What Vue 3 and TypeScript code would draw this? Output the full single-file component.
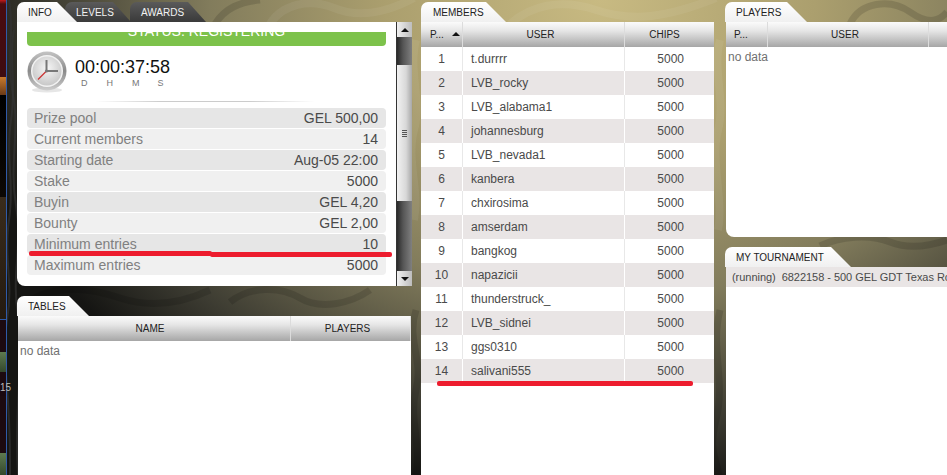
<script setup lang="ts">
interface Member { pos: number; user: string; chips: number }
const users = ['t.durrrr','LVB_rocky','LVB_alabama1','johannesburg','LVB_nevada1','kanbera','chxirosima','amserdam','bangkog','napazicii','thunderstruck_','LVB_sidnei','ggs0310','salivani555']
const members: Member[] = users.map((user, i) => ({ pos: i + 1, user, chips: 5000 }))
const info: [string, string][] = [
  ['Prize pool','GEL 500,00'],['Current members','14'],['Starting date','Aug-05 22:00'],['Stake','5000'],
  ['Buyin','GEL 4,20'],['Bounty','GEL 2,00'],['Minimum entries','10'],['Maximum entries','5000'],
]
</script>

<template>
  <div class="page">
    <div class="bg">
      <svg class="swirls" width="947" height="475" viewBox="0 0 947 475" fill="none">
        <g stroke="#000" stroke-opacity=".13" stroke-width="7">
          <path d="M30 300c30-16 60-12 90-2s60 6 90-8"/>
          <path d="M230 302c20-16 50-16 70-4s50 6 70-8"/>
          <path d="M416 310c-10 30 8 50 0 80s8 60-2 95"/>
          <path d="M720 310c-10 40 6 70-4 110s6 40 2 65"/>
          <path d="M820 246c20-10 50-12 70-4s40 4 57-2"/>
          <path d="M850 24c10-22 40-26 60-12s30 8 37 0"/>
          <path d="M215 24c10-16 25-22 45-24"/>
        </g>
        <g stroke="#fff" stroke-opacity=".06" stroke-width="8">
          <path d="M270 24c12-20 40-26 64-16s50 6 80-10"/>
          <path d="M510 24c20-18 50-26 86-14s70 8 120-12"/>
          <path d="M416 40c-8 30 6 60-2 90s6 60 0 90"/>
          <path d="M720 40c-8 30 6 60-2 90s6 70 0 100"/>
        </g>
        <g stroke="#333" stroke-opacity=".7" stroke-width="2">
          <path d="M9 0c6 30-3 60 4 95s-4 70 3 110s-5 70 2 110s-4 80 0 160"/>
          <path d="M14 30c-6 30 3 50-3 90s4 60-2 100s5 60-2 100s4 60 3 155"/>
        </g>
      </svg>
    </div>
    <div class="strip">
      <div class="s-red"></div>
      <div class="s-orange"></div>
      <div class="s-black"></div>
      <div class="s-brown"></div>
      <div class="s-maroon"></div>
      <div class="s-green"></div>
      <div class="s-gap"></div>
      <div class="s-num">15</div>
      <div class="s-maroon2"></div>
      <div class="s-green s-green2"></div>
    </div>

    <div class="col col-left">
      <section class="info-panel">
        <div class="tabs">
          <div class="tab active tab-info">INFO</div>
          <div class="tab dark tab-levels">LEVELS</div>
          <div class="tab dark tab-awards">AWARDS</div>
        </div>
        <div class="info-body">
          <div class="info-scroll">
            <div class="status"><span>STATUS: REGISTERING</span></div>
            <div class="timer">
              <svg width="40" height="42" viewBox="0 0 40 42">
                <defs>
                  <linearGradient id="rim" x1="0" y1="0" x2="0" y2="1">
                    <stop offset="0" stop-color="#c4c4c4"/><stop offset=".5" stop-color="#8a8a8a"/><stop offset="1" stop-color="#cfcfcf"/>
                  </linearGradient>
                  <radialGradient id="face" cx=".5" cy=".4" r=".65">
                    <stop offset="0" stop-color="#f6f6f6"/><stop offset="1" stop-color="#c4c4c4"/>
                  </radialGradient>
                </defs>
                <ellipse cx="20" cy="39" rx="15" ry="2.5" fill="#e6e6e6"/>
                <circle cx="20" cy="20" r="19.5" fill="url(#rim)"/>
                <circle cx="20" cy="20" r="16" fill="#f2f2f2"/>
                <circle cx="20" cy="20" r="14.5" fill="url(#face)"/>
                <path d="M19.5 20V9" stroke="#777" stroke-width="2"/>
                <path d="M19.5 20H31" stroke="#777" stroke-width="2"/>
                <path d="M19.5 20L11 28.5" stroke="#c33" stroke-width="1.2"/>
                <circle cx="19.5" cy="20" r="1.6" fill="#777"/>
              </svg>
              <div class="count">
                <div class="digits">00:00:37:58</div>
                <div class="units"><span>D</span><span>H</span><span>M</span><span>S</span></div>
              </div>
            </div>
            <div class="sep"></div>
            <div class="rows">
              <div v-for="(r, i) in info" :key="r[0]" class="irow" :class="{ odd: i % 2 === 0 }">
                <span class="ilabel">{{ r[0] }}</span><span class="ival">{{ r[1] }}</span>
              </div>
            </div>
            <i class="mark mark-a"></i><i class="mark mark-b"></i>
          </div>
          <div class="scrollbar">
            <div class="sb-btn"><b class="up"></b></div>
            <div class="sb-track sb-t1"></div>
            <div class="sb-thumb"><span></span><span></span><span></span><span></span></div>
            <div class="sb-track sb-t2"></div>
            <div class="sb-btn"><b class="down"></b></div>
          </div>
        </div>
      </section>

      <section class="tables-panel">
        <div class="tabs"><div class="tab active tab-tables">TABLES</div></div>
        <div class="card">
          <div class="thead">
            <div class="th name-col">NAME</div>
            <div class="th players-col">PLAYERS</div>
          </div>
          <div class="nodata">no data</div>
        </div>
      </section>
    </div>

    <div class="col col-mid">
      <div class="tabs"><div class="tab active tab-members">MEMBERS</div></div>
      <div class="card">
        <div class="thead">
          <div class="th c-pos pos-head">P...<b class="up sort"></b></div>
          <div class="th c-user">USER</div>
          <div class="th c-chips">CHIPS</div>
        </div>
        <div v-for="m in members" :key="m.pos" class="mrow" :class="{ alt: m.pos % 2 === 0 }">
          <div class="c-pos cell-pos">{{ m.pos }}</div>
          <div class="c-user cell-user">{{ m.user }}</div>
          <div class="c-chips cell-chips">{{ m.chips }}</div>
        </div>
        <i class="mark mark-c"></i>
      </div>
    </div>

    <div class="col col-right">
      <section class="players-panel">
        <div class="tabs"><div class="tab active tab-players">PLAYERS</div></div>
        <div class="card players-card">
          <div class="thead">
            <div class="th pp-pos pos-left">P...</div>
            <div class="th pp-user">USER</div>
            <div class="th pp-rest"></div>
          </div>
          <div class="nodata">no data</div>
        </div>
      </section>
      <section class="tourn-panel">
        <div class="tabs"><div class="tab active tab-tourn">MY TOURNAMENT</div></div>
        <div class="card tourn-card">
          <div class="trow">(running)&nbsp; 6822158 - 500 GEL GDT Texas Rockets Freeroll</div>
        </div>
      </section>
    </div>
  </div>
</template>

<style>
html, body { margin: 0; background: #222; }
</style>

<style scoped>
.page {
  position: relative; width: 947px; height: 475px; overflow: hidden; display: flex;
  font-family: "Liberation Sans", Arial, sans-serif; color: #333; box-sizing: border-box; padding: 2px 0 0 17px;
}
.bg {
  position: absolute; inset: 0;
  background: radial-gradient(ellipse 650px 500px at 600px 0, #c8ba82 0%, #ab9f6e 33%, #827c5c 60%, #3d3c32 85%, #151513 100%);
}
.swirls { position: absolute; inset: 0; }
.strip {
  position: absolute; left: 0; top: 0; width: 6px; height: 100%; border-right: 1px solid #2f5aa8;
  display: flex; flex-direction: column; background: #120a0a;
}
.s-red { height: 77px; flex: none; background: linear-gradient(180deg, #c41a1a 0, #4a0c10 4px, #3e0c10 100%); }
.s-orange { height: 18px; flex: none; background: linear-gradient(180deg, #c87a2c, #6a3a18); }
.s-black { height: 102px; flex: none; background: linear-gradient(180deg, #000, #0c0804); }
.s-brown { height: 122px; flex: none; background: linear-gradient(180deg, #3a2c1c, #241a10); border-bottom: 1px solid #2f5aa8; }
.s-maroon { height: 32px; flex: none; background: #1c0a10; }
.s-green { height: 20px; flex: none; background: linear-gradient(180deg, #5e7a50, #33482c); }
.s-gap { height: 8px; flex: none; background: #1c0a10; }
.s-num { height: 16px; flex: none; font-size: 10px; line-height: 16px; color: #bbb; white-space: nowrap; background: #1a0810; }
.s-maroon2 { height: 57px; flex: none; background: #1c0a10; }
.s-green2 { height: 22px; }
.col { position: relative; display: flex; flex-direction: column; flex: none; }
.col-left { width: 395px; margin-right: 9px; }
.col-mid { width: 293px; margin-right: 11px; }
.col-right { width: 222px; }

.tabs { position: relative; height: 20px; display: flex; }
.tab {
  height: 20px; box-sizing: border-box; font-size: 10px; line-height: 21px; flex: none;
  border-top-left-radius: 7px;
}
.tab.active { background: linear-gradient(180deg, #fff, #f0f0f0); color: #222; clip-path: polygon(0 0, calc(100% - 20px) 0, 100% 100%, 0 100%); z-index: 2; }
.tab.dark { background: linear-gradient(180deg, #5a5a5a, #3a3a3a); color: #f2f2f2; clip-path: polygon(0 0, calc(100% - 18px) 0, 100% 100%, 0 100%); }
.tab-info { width: 60px; padding-left: 11px; }
.tab-levels { width: 66px; padding-left: 11px; margin-left: -12px; z-index: 1; }
.tab-awards { width: 76px; padding-left: 11px; margin-left: -1px; }
.tab-tables { width: 72px; padding-left: 11px; }
.tab-members { width: 85px; padding-left: 12px; }
.tab-players { width: 82px; padding-left: 11px; }
.tab-tourn { width: 126px; padding-left: 11px; }

.info-panel { height: 284px; display: flex; flex-direction: column; }
.info-body { position: relative; display: flex; height: 264px; }
.info-scroll {
  position: relative; width: 379px; background: #fff; border-bottom-left-radius: 8px; box-sizing: border-box;
  padding: 10px 10px 0; overflow: hidden;
}
.status {
  height: 14px; overflow: hidden; background: #7dc24b; border-radius: 0 0 4px 4px; color: #fff; font-size: 14px;
  text-align: center; line-height: 16px;
}
.status span { display: block; margin-top: -9px; }
.timer { display: flex; height: 48px; padding-top: 5px; align-items: flex-start; box-sizing: border-box; }
.count { margin-left: 8px; padding-top: 6px; }
.digits { font-size: 18px; line-height: 20px; color: #111; }
.units { display: flex; font-size: 9px; line-height: 11px; color: #777; margin-top: 1px; padding-left: 6px; }
.units span { width: 25.5px; }
.sep { height: 1px; width: 220px; margin: 7px 0 6px 68px; background: linear-gradient(90deg, transparent, #ccc 30%, #ccc 70%, transparent); }
.rows { display: flex; flex-direction: column; gap: 1px; }
.irow {
  height: 20px; display: flex; justify-content: space-between; align-items: center; font-size: 14px; border-radius: 4px;
  background: #f0f0f0; padding: 0 8px 0 7px;
}
.irow.odd { background: #e6e6e6; }
.ilabel { color: #808080; }
.ival { color: #4a4a4a; }

.scrollbar { width: 16px; display: flex; flex-direction: column; border-left: 1px solid #333; box-sizing: border-box; }
.sb-btn { height: 15px; flex: none; background: linear-gradient(90deg, #f0f0f0, #bdbdbd); display: flex; align-items: center; justify-content: center; }
.sb-track { background: linear-gradient(90deg, #2a2a2a, #555 40%, #808080); flex: none; }
.sb-t1 { height: 28px; }
.sb-t2 { height: 70px; }
.sb-thumb {
  height: 136px; flex: none; background: linear-gradient(90deg, #f2f2f2, #d8d8d8 60%, #a8a8a8);
  display: flex; flex-direction: column; justify-content: center; align-items: center; gap: 1px;
}
.sb-thumb span { display: block; width: 5px; height: 1px; background: #555; }
.up, .down { display: block; width: 0; height: 0; border-left: 4px solid transparent; border-right: 4px solid transparent; }
.up { border-bottom: 4px solid #111; }
.down { border-top: 4px solid #111; }

.tables-panel { margin-top: 10px; flex: 1; display: flex; flex-direction: column; }
.card { position: relative; background: #fff; flex: 1; }
.tables-panel .card { margin: 0 1px 0 1px; }
.thead { display: flex; height: 25px; background: linear-gradient(180deg, #fbfbfb 0%, #e6e6e6 35%, #a6a6a6 100%); }
.th {
  font-size: 10px; line-height: 25px; text-align: center; color: #222; box-sizing: border-box;
  border-right: 1px solid #dcdcdc; flex: none; padding-right: 6px;
}
.name-col { width: 273px; padding-right: 8px; }
.players-col { width: 120px; padding-right: 6px; }
.nodata { font-size: 12px; color: #707070; padding: 3px 2px; line-height: 14px; }

.c-pos { width: 42px; flex: none; box-sizing: border-box; }
.c-user { width: 162px; flex: none; box-sizing: border-box; }
.c-chips { width: 89px; flex: none; box-sizing: border-box; }
.th.c-chips { padding-right: 10px; border-right: 0; }
.pos-head { position: relative; text-align: left; padding-left: 9px; }
.sort { position: absolute; left: 31px; top: 10px; }
.mrow { display: flex; height: 24px; font-size: 12px; line-height: 25px; color: #4a4a4a; background: #fff; }
.mrow.alt { background: #e9e5e5; }
.mrow > div { border-right: 1px solid #e8e8e8; }
.mrow.alt > div { border-right-color: #fff; }
.mrow > div:last-child { border-right: 0; }
.cell-pos { text-align: center; }
.cell-user { padding-left: 8px; }
.cell-chips { text-align: right; padding-right: 30px; }

.players-panel { height: 235px; display: flex; flex-direction: column; }
.players-card { margin-left: 1px; border-bottom-left-radius: 8px; }
.pp-pos { width: 42px; }
.pos-left { text-align: left; padding-left: 8px; }
.pp-user { width: 161px; }
.pp-rest { flex: 1; border-right: 0; }
.tourn-panel { margin-top: 10px; flex: 1; display: flex; flex-direction: column; }
.tourn-card { margin-left: 1px; overflow: hidden; }
.trow { height: 20px; line-height: 20px; background: #e9e5e5; font-size: 11px; color: #4a4a4a; padding-left: 6px; white-space: nowrap; letter-spacing: -.04px; }

.mark { position: absolute; display: block; height: 4.5px; background: #ed1c2e; border-radius: 2px; z-index: 5; }
.mark-a { left: 12px; width: 183px; top: 229px; }
.mark-b { left: 193px; width: 182px; top: 230.3px; }
.mark-c { left: 16px; width: 256px; top: 359px; }
</style>
